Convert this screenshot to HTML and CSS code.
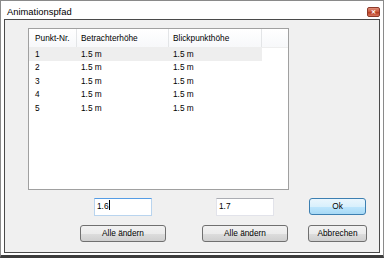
FILE: index.html
```html
<!DOCTYPE html>
<html lang="de">
<head>
  <meta charset="UTF-8">
  <link rel="stylesheet" href="styles.css">
  <title>Animationspfad</title>
</head>
<body>

<div class="window">
  <div class="titlebar">
    <div class="title">Animationspfad</div>
    <div class="close-btn">&#x2715;</div>
  </div>

  <div class="client">
    <div class="list">
      <div class="list-header">
        <div class="col">Punkt-Nr.</div>
        <div class="col">Betrachterhöhe</div>
        <div class="col">Blickpunkthöhe</div>
        <div class="col"></div>
      </div>
      <div class="list-row selected">
        <div class="col">1</div>
        <div class="col">1.5 m</div>
        <div class="col">1.5 m</div>
      </div>
      <div class="list-row">
        <div class="col">2</div>
        <div class="col">1.5 m</div>
        <div class="col">1.5 m</div>
      </div>
      <div class="list-row">
        <div class="col">3</div>
        <div class="col">1.5 m</div>
        <div class="col">1.5 m</div>
      </div>
      <div class="list-row">
        <div class="col">4</div>
        <div class="col">1.5 m</div>
        <div class="col">1.5 m</div>
      </div>
      <div class="list-row">
        <div class="col">5</div>
        <div class="col">1.5 m</div>
        <div class="col">1.5 m</div>
      </div>
    </div>

    <div class="controls">
      <div class="textbox focused col-a">1.6<span class="caret"></span></div>
      <div class="textbox col-b">1.7</div>
      <div class="button default col-c">Ok</div>
      <div class="button wide col-a">Alle ändern</div>
      <div class="button wide col-b">Alle ändern</div>
      <div class="button col-c">Abbrechen</div>
    </div>
  </div>
</div>

</body>
</html>
```

FILE: styles.css
```css
body {
  margin: 0;
  font-family: "Liberation Sans", Arial, sans-serif;
  font-size: 8.3px;
  color: #000;
  background-color: #fff;
}

.window {
  width: 384px;
  height: 258px;
  box-sizing: border-box;
  border: 1px solid #8a8a8a;
  border-bottom: 3px solid #3c3c3c;
  padding: 0 3px 2px 3px;
  background-color: #fff;
}

.titlebar {
  height: 18px;
  display: flex;
  align-items: center;
  justify-content: space-between;
}

.title {
  font-size: 9.4px;
  padding-left: 3px;
  margin-top: 2px;
}

.close-btn {
  width: 13px;
  height: 10px;
  margin-top: 4px;
  border-radius: 2px;
  background: linear-gradient(#e08e7a, #c75335 50%, #b5391d 51%, #d8735a);
  border: 1px solid #8d3a2a;
  box-sizing: border-box;
  color: #fff;
  font-size: 6px;
  font-weight: bold;
  line-height: 8px;
  text-align: center;
}

.client {
  height: 234px;
  box-sizing: border-box;
  border: 1px solid #4a4a4a;
  background-color: #f0f0f0;
  padding: 8px 0 0 23px;
}

.list {
  width: 261px;
  height: 162px;
  box-sizing: border-box;
  border: 1px solid #a0a0a0;
  background-color: #fff;
}

.list-header {
  height: 19px;
  box-sizing: border-box;
  display: grid;
  grid-template-columns: 48px 92px 93px 1fr;
  border-bottom: 1px solid #eeeeee;
  background: linear-gradient(#ffffff, #f7f8fa);
}

.list-header .col {
  border-right: 1px solid #e3e5e7;
  line-height: 18px;
}

.list-header .col:last-child {
  border-right: none;
}

.list-row {
  width: 233px;
  height: 13.5px;
  display: grid;
  grid-template-columns: 48px 92px 93px;
  line-height: 13.5px;
}

.list-row.selected {
  height: 13px;
  line-height: 13px;
  background-color: #eeeeee;
}

.col {
  box-sizing: border-box;
  padding-left: 4px;
  white-space: nowrap;
}

.col:first-child {
  padding-left: 6px;
}

.controls {
  margin-top: 8px;
  margin-left: 52px;
  display: grid;
  grid-template-columns: 86px 36px 86px 20px 59px;
  grid-template-rows: 18px 17px;
  row-gap: 9px;
  justify-items: center;
  align-items: start;
}

.col-a {
  grid-column: 1;
}

.col-b {
  grid-column: 3;
}

.col-c {
  grid-column: 5;
}

.textbox {
  width: 58px;
  height: 18px;
  box-sizing: border-box;
  border: 1px solid #e2e3ea;
  border-top-color: #abadb3;
  background-color: #fff;
  padding-left: 2px;
  line-height: 14px;
}

.textbox.focused {
  border-color: #b9d4ee;
  border-top-color: #569de5;
}

.caret {
  display: inline-block;
  width: 1px;
  height: 10px;
  background-color: #000;
  vertical-align: -1px;
}

.button {
  width: 59px;
  height: 17px;
  box-sizing: border-box;
  border: 1px solid #707070;
  border-radius: 3px;
  background: linear-gradient(#f2f2f2, #ebebeb 50%, #dddddd 51%, #cfcfcf);
  text-align: center;
  line-height: 15px;
}

.button.wide {
  width: 86px;
}

.button.default {
  width: 57px;
  border-color: #3c7fb1;
  background: linear-gradient(#eaf6fd, #d9f0fc 50%, #bee6fd 51%, #a7d9f5);
}
```
